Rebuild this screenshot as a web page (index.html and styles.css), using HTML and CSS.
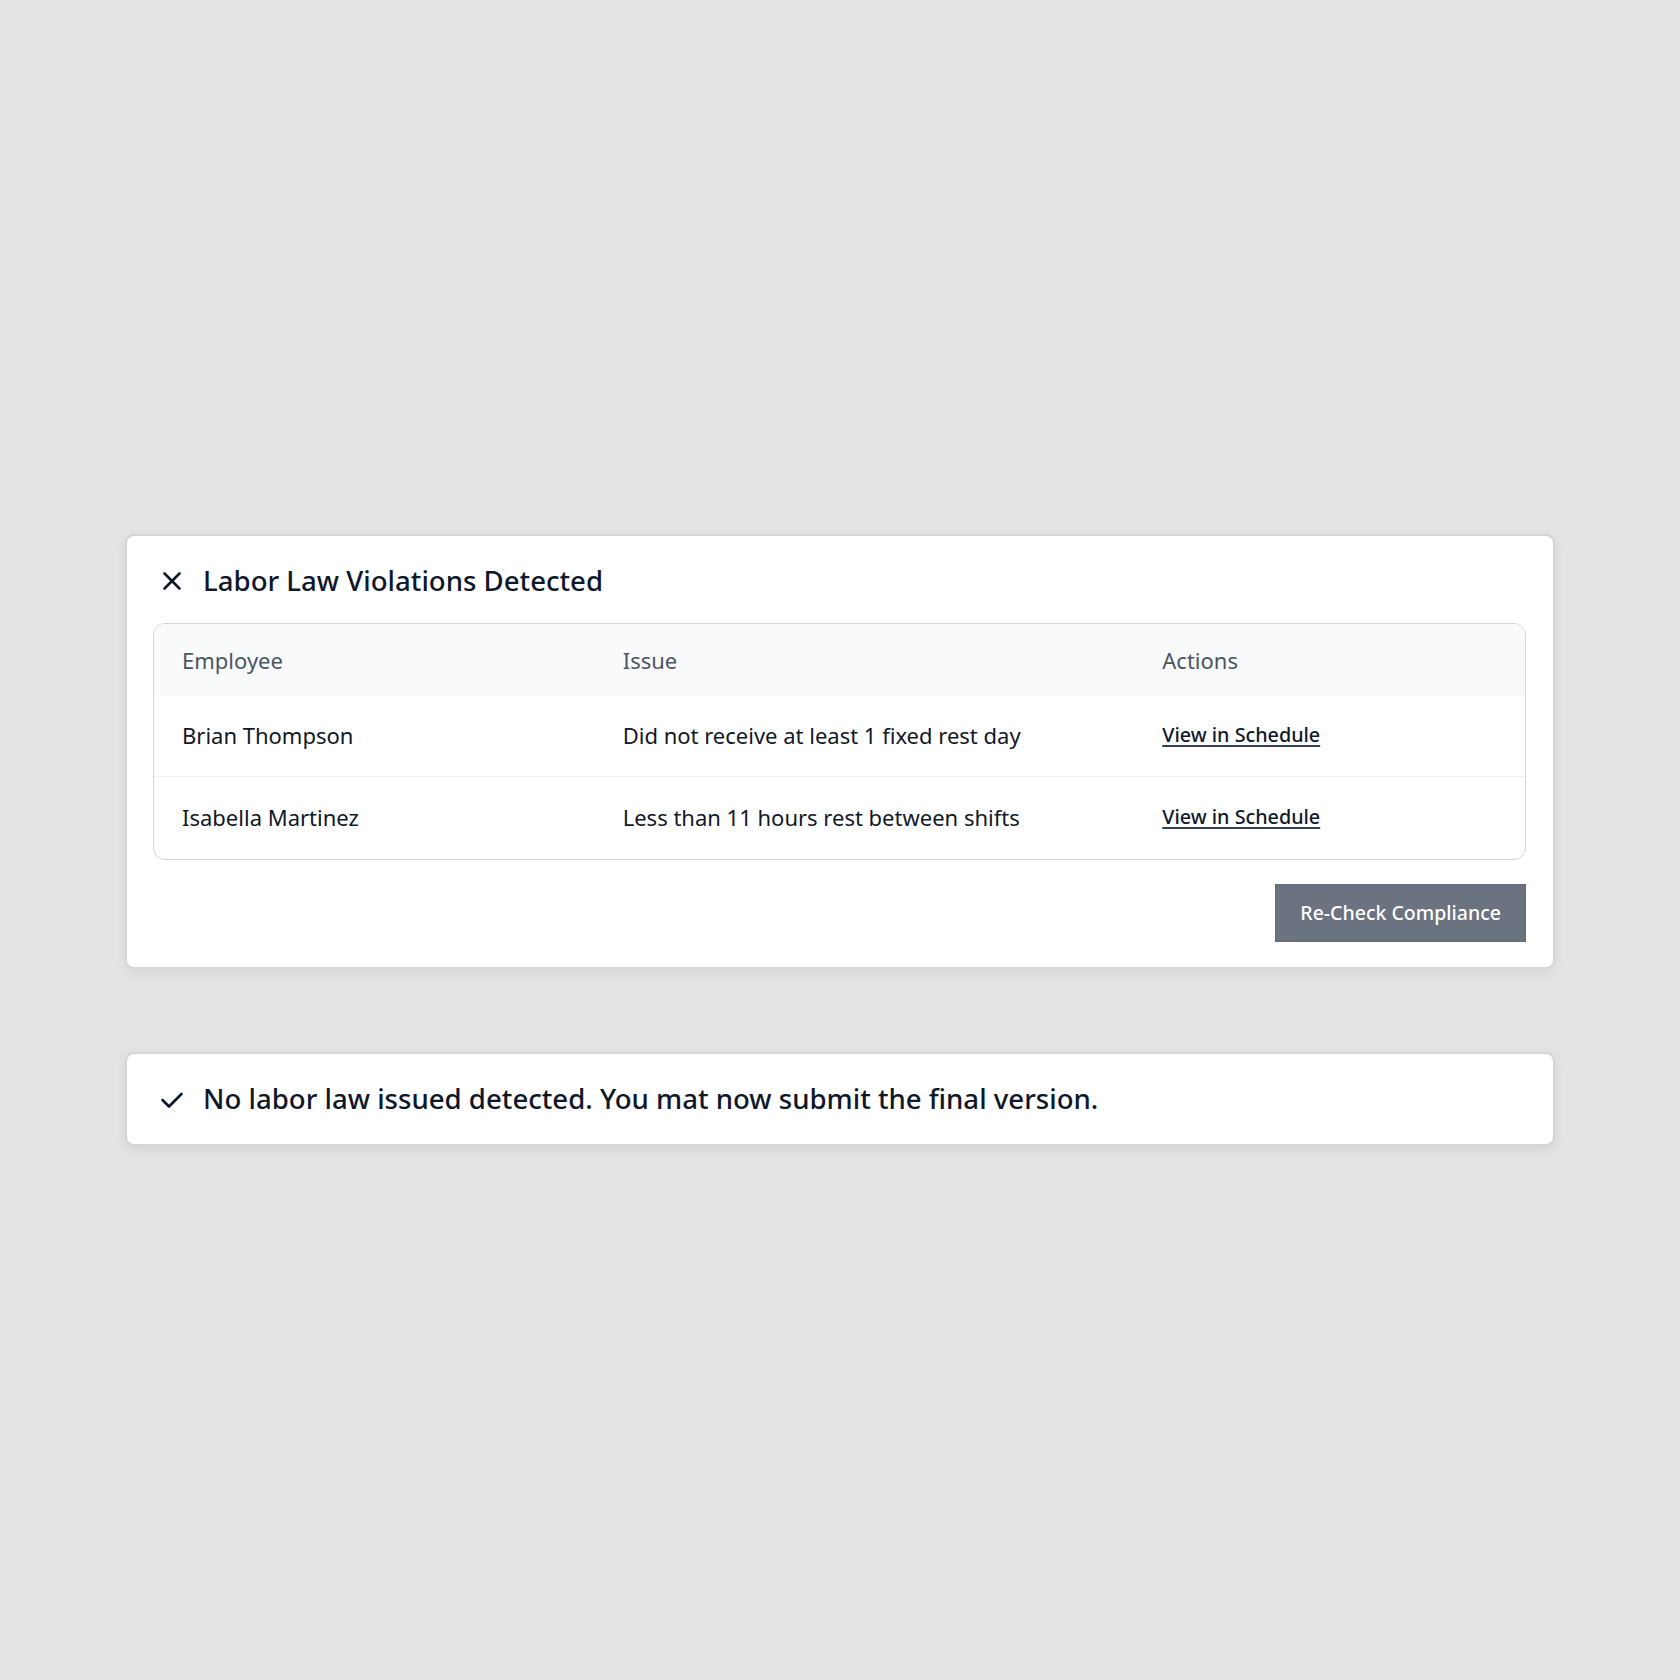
FILE: index.html
```html
<!DOCTYPE html>
<html lang="en">
<head>
<meta charset="utf-8">
<title>Labor Law Compliance</title>
<link rel="stylesheet" href="styles.css">
</head>
<body>
<main class="stack">
  <section class="card card-violations">
    <header class="card-head">
      <svg class="icon" viewBox="0 0 24 24" width="24" height="24" aria-hidden="true">
        <path d="M4.5 4.5 L19.5 19.5 M19.5 4.5 L4.5 19.5" fill="none" stroke="currentColor" stroke-width="2.6" stroke-linecap="round"/>
      </svg>
      <h2 class="card-title">Labor Law Violations Detected</h2>
    </header>
    <div class="table">
      <div class="row row-head">
        <div class="cell">Employee</div>
        <div class="cell">Issue</div>
        <div class="cell">Actions</div>
      </div>
      <div class="row row-body">
        <div class="cell">Brian Thompson</div>
        <div class="cell">Did not receive at least 1 fixed rest day</div>
        <div class="cell"><a class="link" href="#">View in Schedule</a></div>
      </div>
      <div class="row row-body row-last">
        <div class="cell">Isabella Martinez</div>
        <div class="cell">Less than 11 hours rest between shifts</div>
        <div class="cell"><a class="link" href="#">View in Schedule</a></div>
      </div>
    </div>
    <div class="card-foot">
      <button class="btn" type="button">Re-Check Compliance</button>
    </div>
  </section>

  <section class="card card-success">
    <header class="card-head">
      <svg class="icon" viewBox="0 0 24 24" width="24" height="24" aria-hidden="true">
        <path d="M2.5 12 L9 18.5 L21.5 6" fill="none" stroke="currentColor" stroke-width="2.6" stroke-linecap="round" stroke-linejoin="round"/>
      </svg>
      <p class="card-title">No labor law issued detected. You mat now submit the final version.</p>
    </header>
  </section>
</main>
</body>
</html>
```

FILE: styles.css
```css
html, body {
  margin: 0;
  padding: 0;
}

body {
  background: #e3e3e3;
  min-height: 100vh;
  display: flex;
  flex-direction: column;
  justify-content: center;
  align-items: center;
  font-family: "Noto Sans", "Open Sans", "Liberation Sans", sans-serif;
  color: #111827;
}

.stack {
  width: 1430px;
  display: flex;
  flex-direction: column;
  gap: 83px;
}

.card {
  background: #ffffff;
  border: 2px solid #d5d5d5;
  border-radius: 9px;
  box-shadow: 0 4px 12px rgba(0, 0, 0, 0.06);
}

.card-violations {
  padding: 26px 27px 25px 26px;
}

.card-success {
  padding: 26px 26px 27px;
}

.card-head {
  display: flex;
  align-items: center;
  gap: 19px;
  padding-left: 7px;
}

.icon {
  flex: none;
  display: block;
  color: #0f172a;
  margin-top: 2px;
}

.card-title {
  margin: 0;
  font-size: 27.6px;
  line-height: 36px;
  font-weight: 500;
  color: #0f172a;
}

.card-success .card-title {
  line-height: 37px;
}

.table {
  margin-top: 25px;
  border: 1px solid #d4d4d8;
  border-radius: 12px;
  overflow: hidden;
}

.row {
  display: grid;
  grid-template-columns: 441fr 540fr 391fr;
}

.row-head {
  height: 72px;
  background: #f9fafb;
  color: #4b5563;
}

.row-body {
  height: 80px;
  border-bottom: 1px solid #f1f2f4;
}

.row-last {
  height: 82px;
  border-bottom: none;
}

.cell {
  display: flex;
  align-items: center;
  padding: 0 28px;
  font-size: 22px;
  line-height: 28px;
}

.row-body .cell {
  padding-bottom: 3px;
}

.link {
  font-size: 19.75px;
  font-weight: 500;
  color: #0f172a;
  text-decoration: underline;
  text-decoration-color: #334155;
  text-decoration-thickness: 2px;
  text-underline-offset: 3px;
}

.card-foot {
  margin-top: 24px;
  display: flex;
  justify-content: flex-end;
}

.btn {
  height: 58px;
  padding: 0 24px;
  background: #6b7280;
  border: 1px solid #666d7a;
  border-radius: 0;
  color: #ffffff;
  font-family: inherit;
  font-size: 19.5px;
  font-weight: 500;
  line-height: 24px;
}
```
